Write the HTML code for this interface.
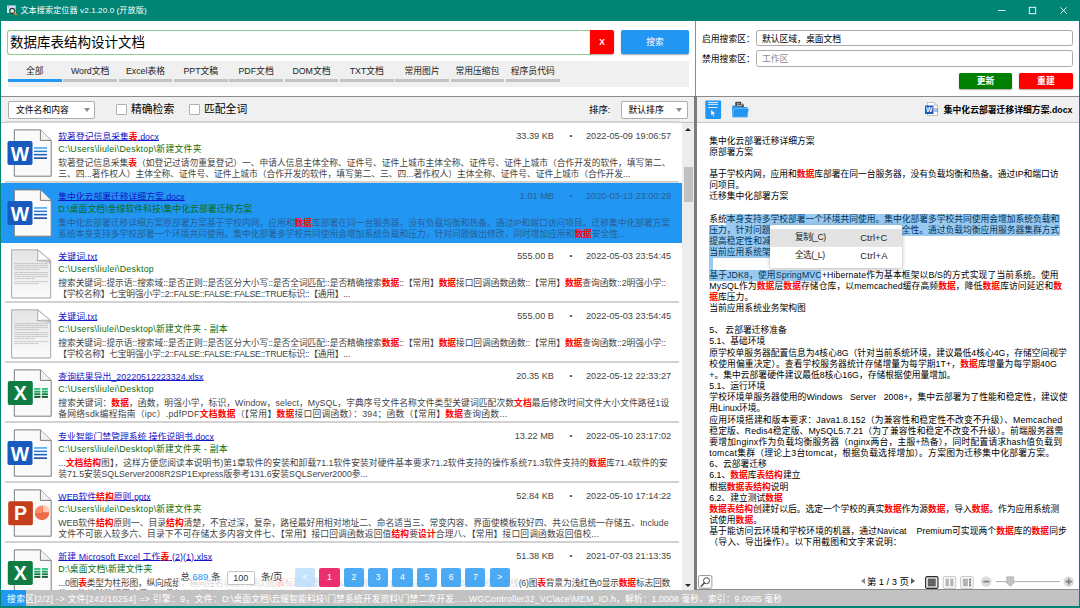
<!DOCTYPE html>
<html lang="zh-CN"><head><meta charset="utf-8"><title>文本搜索定位器</title>
<style>
*{box-sizing:border-box;margin:0;padding:0}
html,body{width:1080px;height:608px;overflow:hidden}
body{position:relative;background:#008575;font-family:"Liberation Sans","Noto Sans CJK SC",sans-serif;font-size:8.8px;color:#000}
b.r{color:#f00;font-weight:bold}
#titlebar{position:absolute;left:0;top:0;width:1080px;height:21px;background:#008575;color:#fff}
#titlebar::after{content:"";position:absolute;left:1px;top:20.65px;width:1078px;height:.5px;background:#fff}
.appicon{position:absolute;left:6px;top:4px;width:14px;height:14px}
.apptitle{position:absolute;left:20.4px;top:5.2px;font-size:8.1px;line-height:11px;white-space:nowrap}
.wc{position:absolute;right:0;top:0;width:140px;height:21px}
#left-top{position:absolute;left:1px;top:21px;width:696px;height:75px;background:#fff}
.searchbox{position:absolute;left:6px;top:9px;width:584px;height:25px;border:1px solid #8fce8f;border-right:none;border-radius:3px 0 0 3px;background:#fff}
.searchbox span{position:absolute;left:2px;top:2.5px;font-size:13.5px;line-height:18px;white-space:nowrap}
.xbtn{position:absolute;left:589px;top:9.2px;width:24px;height:23.8px;background:#f00;color:#fff;font-size:8.5px;font-weight:bold;text-align:center;line-height:24px;border-radius:0 2px 2px 0;box-shadow:0 1px 1.5px rgba(0,0,0,.35)}
.sbtn{position:absolute;left:620.2px;top:9.2px;width:67.6px;height:23.8px;background:#2196f3;color:#fff;font-size:8.8px;text-align:center;line-height:24px;border-radius:2px;box-shadow:0 1px 1.5px rgba(0,0,0,.35)}
.tabs{position:absolute;left:7px;top:40px;width:681px;height:26px;background:#f0f0f0}
.tab{position:absolute;top:0;width:53.6px;height:26px;text-align:center}
.tab span{display:block;font-size:8.8px;line-height:12px;margin-top:4px;white-space:nowrap;color:#222}
.tab i{position:absolute;left:0;right:0;top:18px;height:3px;background:#c3c3c3}
.tab.on i{background:#2196f3}
#right-top{position:absolute;left:697px;top:21px;width:382px;height:75px;background:#fff}
#right-top .lbl{position:absolute;left:5px;font-size:8.8px;line-height:12px;white-space:nowrap}
.inp{position:absolute;left:58.9px;width:317px;height:16.3px;border:1px solid #ababab;border-radius:2.5px;background:#fff}
.inp span{position:absolute;left:5px;top:1.5px;font-size:8.8px;line-height:12px;white-space:nowrap}
.inp span.ph{color:#8c8c8c}
.btn{position:absolute;top:51.8px;width:53.8px;height:16px;color:#fff;font-size:8.8px;font-weight:bold;text-align:center;line-height:16px;border-radius:1.5px;box-shadow:0 1px 1.5px rgba(0,0,0,.35)}
.btn.g{background:#008000}
.btn.rd{background:#f00}
#hline{position:absolute;left:1px;top:96px;width:1078px;height:1px;background:#8c8c8c}
#filter{position:absolute;left:1px;top:97px;width:694px;height:25.5px;background:#f0f0f0;border-bottom:1px solid #c6c6c6}
.combo{position:absolute;top:4.2px;height:17.6px;border:1px solid #adadad;border-radius:2px;background:#fff}
.combo span{position:absolute;left:7px;top:2px;font-size:8.8px;line-height:12px;white-space:nowrap}
.combo .arr{position:absolute;right:4.5px;top:5.5px;width:0;height:0;border-left:3.3px solid transparent;border-right:3.3px solid transparent;border-top:4.2px solid #8a8a8a}
.cb{position:absolute;top:6.6px;width:11px;height:11px;border:1px solid #b0b0b0;background:#fff;border-radius:1px}
.cbl{position:absolute;top:5px;font-size:10.8px;line-height:15px;white-space:nowrap}
.sortl{position:absolute;left:588px;top:6px;font-size:9.4px;line-height:13px;white-space:nowrap}
#rtool{position:absolute;left:697px;top:97px;width:382px;height:25.5px;background:#f0f0f0;border-bottom:1px solid #c6c6c6}
.ti1{position:absolute;left:8px;top:3px;width:18px;height:20px}
.ti2{position:absolute;left:34.9px;top:4.2px;width:22px;height:20px}
.dtitle{position:absolute;left:246.75px;top:5.5px;font-size:8.8px;font-weight:bold;line-height:14px;white-space:nowrap}
.dicon{position:absolute;left:227px;top:3.5px;width:18px;height:18px}
#list{position:absolute;left:1px;top:0;width:681px;height:590px;overflow:hidden}
#list::before{content:"";position:absolute;left:0;top:122.5px;width:681px;height:468px;background:#fff}
.item{position:absolute;left:0;width:681px;height:60px}
.item::after{content:"";position:absolute;left:3.5px;right:3px;top:-1.5px;height:1.4px;background:#d2d2d2}
.item.sel{background:#2196f3}
.item.sel+.item::after{display:none}
.ic{position:absolute;left:0;top:0;width:56px;height:60px}
.item .t{position:absolute;left:57.3px;top:8.2px;font-size:8.8px;line-height:12px;color:#1414c8;text-decoration:underline;text-underline-offset:0.2px;text-decoration-thickness:.8px;white-space:nowrap}
.item .p{position:absolute;left:57.3px;top:20.5px;font-size:8.8px;line-height:12px;color:#0c6b0c;white-space:nowrap}
.item .d{position:absolute;left:57.3px;font-size:8.75px;line-height:12px;color:#444;white-space:nowrap}
.item .d1{top:34.3px}
.item .d2{top:45.3px}
.item .sz{position:absolute;right:128px;top:7px;font-size:9.2px;line-height:12px;color:#444;white-space:nowrap}
.item .dot{position:absolute;left:566px;top:7px;width:8px;text-align:center;font-size:8px;line-height:12px;color:#444}
.item .dt{position:absolute;left:585px;top:7px;font-size:9.2px;line-height:12px;color:#444;white-space:nowrap}
.item.sel .d,.item.sel .sz,.item.sel .dt,.item.sel .dot{color:#2a5f93}
#vscroll{position:absolute;left:682px;top:122.5px;width:13px;height:467.5px;background:#ededed}
#vscroll .thumb{position:absolute;left:2px;top:44px;width:9px;height:35px;background:#c1c1c1}
#vscroll .up{position:absolute;left:2.9px;top:5.8px;border-left:3.1px solid transparent;border-right:3.1px solid transparent;border-bottom:3.3px solid #262626}
#vscroll .down{position:absolute;left:2.9px;top:461px;border-left:3.1px solid transparent;border-right:3.1px solid transparent;border-top:3.3px solid #262626}
#split{position:absolute;left:694.4px;top:96px;width:2.3px;height:494px;background:#7c7c7c}
#split2{position:absolute;left:694.9px;top:21px;width:1.1px;height:75px;background:#8c8c8c}
#pager{position:absolute;left:0;top:564px;width:560px;height:26px}
#pager::before{content:"";position:absolute;left:178px;top:0;width:341px;height:26px;background:rgba(255,255,255,.78)}
#pager .pt{position:absolute;top:5.5px;font-size:9.4px;line-height:13px;color:#333;white-space:nowrap}
#pager .pt.bl{color:#2196f3}
#pager .pin{position:absolute;left:227px;top:6.5px;width:27.5px;height:14px;border:1px solid #c4c4c4;border-radius:2px;background:rgba(255,255,255,.9);font-size:9px;line-height:12px;text-align:center;color:#333}
.pb{position:absolute;top:3.5px;width:20.3px;height:19px;background:rgba(33,150,243,.8);color:#fff;font-size:8.5px;line-height:19px;text-align:center;border-radius:2px}
.pb.cur{background:rgba(233,30,99,.92)}
.pb.dis{background:rgba(187,222,251,.85)}
#doc{position:absolute;left:697px;top:122.5px;width:382px;height:468px;background:#fff;overflow:hidden}
.ln{position:absolute;left:12.3px;font-size:8.78px;line-height:11.16px;height:11.16px;white-space:nowrap;color:#000}
.ln.j{text-align:justify;text-align-last:justify;white-space:normal;overflow:visible}
.selov{position:absolute;background:rgba(0,120,215,.4);z-index:3}
#ctx{position:absolute;left:769.8px;top:225.2px;width:132px;height:42.8px;background:#fff;border-radius:2px;box-shadow:0 1px 4px rgba(0,0,0,.3);z-index:5}
#ctx .mi{position:absolute;left:0;width:132px;height:17.5px;font-size:8.8px;line-height:17.5px;color:#222;white-space:nowrap}
#ctx .mi.on{top:3.9px;background:#e3e3e3}
#ctx .mi:not(.on){top:21.4px}
#ctx .a{position:absolute;left:25.2px;top:.3px;font-size:8.6px}
#ctx .k{position:absolute;left:90.4px;font-size:9.4px}
#vbar{position:absolute;left:697px;top:568.5px;width:382px;height:21.5px;background:#fff;border-bottom:1px solid #8c8c8c}
#vbar .find{position:absolute;left:1.2px;top:6.3px;width:15px;height:15px}
#vbar .pgnav{position:absolute;left:163.6px;top:6.1px;width:54.4px;height:14px;font-size:9.4px;line-height:14px;text-align:center;white-space:nowrap}
#vbar .pgnav span{position:absolute;left:6.4px;top:0}
#vbar .pgnav i{position:absolute;top:3.5px;width:0;height:0;border-top:3.5px solid transparent;border-bottom:3.5px solid transparent}
#vbar .pgnav .tl{left:0;border-right:4.2px solid #8a8a8a}
#vbar .pgnav .tr{left:50.7px;border-left:4.2px solid #5a5a5a}
#vbar .modes{position:absolute;left:228.4px;top:7px;width:52px;height:14px}
#vbar .zoom{position:absolute;left:283px;top:6.5px;width:96px;height:14px}
#status{position:absolute;left:1px;top:590px;width:1078px;height:16.2px;background:#c3c2c2;color:#fff;font-size:8.8px;line-height:15px;white-space:nowrap;overflow:hidden}
#status .prog{position:absolute;left:0;top:0;width:25px;height:16.2px;background:#2196f3}
#status span{position:absolute;top:2px}

</style></head><body>
<div id="titlebar">
<div class="appicon"><svg width="14" height="14" viewBox="0 0 14 14"><rect x="1" y="1.4" width="8.7" height="7.6" fill="#cfe4f7"/><rect x="1.6" y="2.4" width="1.6" height="0.8" fill="#e0524a"/><circle cx="6.2" cy="6.9" r="2.5" fill="#c9f0d4" stroke="#2f3440" stroke-width="1.1"/><path d="M8.4 9.1L10.2 10.5" stroke="#f5891c" stroke-width="1.6" stroke-linecap="round"/></svg></div>
<div class="apptitle" id="f16" style="letter-spacing:0.096px;">文本搜索定位器 v2.1.20.0 (开放版)</div>
<div class="wc"><svg width="140" height="21" viewBox="0 0 140 21"><path d="M58 10.5H65.5" stroke="#fff" stroke-width="0.9"/><rect x="89.3" y="7.3" width="6.4" height="6.4" fill="none" stroke="#fff" stroke-width="0.9"/><path d="M120.4 7.3L126.8 13.7M126.8 7.3L120.4 13.7" stroke="#fff" stroke-width="0.9"/></svg></div>
</div>
<div id="left-top">
<div class="searchbox"><span>数据库表结构设计文档</span></div>
<div class="xbtn">X</div>
<div class="sbtn">搜索</div>
<div class="tabs"><div class="tab on" style="left:0.00px"><span>全部</span><i></i></div><div class="tab" style="left:55.33px"><span>Word文档</span><i></i></div><div class="tab" style="left:110.66px"><span>Excel表格</span><i></i></div><div class="tab" style="left:165.99px"><span>PPT文稿</span><i></i></div><div class="tab" style="left:221.32px"><span>PDF文档</span><i></i></div><div class="tab" style="left:276.65px"><span>DOM文档</span><i></i></div><div class="tab" style="left:331.98px"><span>TXT文档</span><i></i></div><div class="tab" style="left:387.31px"><span>常用图片</span><i></i></div><div class="tab" style="left:442.64px"><span>常用压缩包</span><i></i></div><div class="tab" style="left:497.97px"><span>程序员代码</span><i></i></div></div>
</div>
<div id="right-top">
<div class="lbl" style="top:12px">启用搜索区：</div>
<div class="inp" style="top:9px"><span>默认区域，桌面文档</span></div>
<div class="lbl" style="top:32.2px">禁用搜索区：</div>
<div class="inp" style="top:29.4px"><span class="ph">工作区</span></div>
<div class="btn g" style="left:261.7px">更新</div>
<div class="btn rd" style="left:322px">重建</div>
</div>
<div id="hline"></div>
<div id="filter">
<div class="combo" style="left:7px;width:87px"><span>文件名和内容</span><i class="arr"></i></div>
<div class="cb" style="left:115px"></div><div class="cbl" style="left:130px">精确检索</div>
<div class="cb" style="left:188px"></div><div class="cbl" style="left:203px">匹配全词</div>
<div class="sortl">排序:</div>
<div class="combo" style="left:619.5px;width:67.3px"><span>默认排序</span><i class="arr"></i></div>
</div>
<div id="rtool">
<div class="ti1"><svg width="18" height="20" viewBox="0 0 18 20"><rect x="0.3" y="0.5" width="15.8" height="18.5" rx="1.2" fill="#2196f3"/><path d="M3 2.5H13M3 4.4H13M3 7.5H12.4" stroke="#fff" stroke-width="0.9" opacity=".9"/><path d="M5.9 9.6V15.6L7.4 14.4L8.5 16.8L9.6 16.3L8.5 14L10.6 13.8Z" fill="#fff" stroke="#1c6fbf" stroke-width="0.35"/></svg></div>
<div class="ti2"><svg width="22" height="20" viewBox="0 0 22 20"><path d="M3.6 1.2H9L11.4 3.6V8H3.6Z" fill="#3c3c3c" stroke="#333" stroke-width="0.6"/><path d="M4.8 2.9H7.6M4.8 4.8H10" stroke="#f4f4f4" stroke-width="0.9"/><path d="M9 1.2V3.6H11.4Z" fill="#eee"/><path d="M0.2 5.6Q0.2 4.6 1.2 4.6H4.2L5.4 6H14.8Q15.6 6 15.6 6.8V16.2H0.2Z" fill="#2196f3"/><path d="M2.2 7.4H16.9L15.3 16.2H0.4Z" fill="#2196f3" stroke="#f2f2f2" stroke-width="0.35"/></svg></div>
<div class="dicon"><svg width="16" height="16" viewBox="0 0 16 16" style="vertical-align:-4px;margin-right:4px"><path d="M3.5 1.5H10.5L13.5 4.5V14.5H3.5Z" fill="#fff" stroke="#aaa" stroke-width="0.7"/><path d="M10.5 1.5V4.5H13.5" fill="#eee" stroke="#aaa" stroke-width="0.7"/><path d="M10 8H14M10 10H14" stroke="#2b66c4" stroke-width="0.8"/><rect x="1" y="4.5" width="8.5" height="8.5" rx="0.6" fill="#185abd"/><text x="5.2" y="11.3" text-anchor="middle" font-family="Liberation Sans, sans-serif" font-weight="bold" font-size="6.8" fill="#fff">W</text></svg></div>
<div class="dtitle" id="f21" style="letter-spacing:0.012px;">集中化云部署迁移详细方案.docx</div>
</div>
<div id="list">
<div class="item" style="top:122.80px">
<div class="ic"><svg width="56" height="60" viewBox="0 0 56 60"><path d="M13.3 6.9H39.4L50.2 17.4V53.2H13.3Z" fill="#fafafa" stroke="#7d7d7d" stroke-width="1"/><path d="M39.4 6.9V17.4H50.2" fill="#f2f2f2" stroke="#7d7d7d" stroke-width="1" stroke-linejoin="round"/><rect x="33" y="24.2" width="13" height="1.5" fill="#41a5ee"/><rect x="33" y="27.6" width="13" height="1.5" fill="#2b7cd3"/><rect x="33" y="30.9" width="13" height="1.5" fill="#185abd"/><rect x="33" y="34.4" width="13" height="1.5" fill="#103f91"/><rect x="6.5" y="18.1" width="25" height="24" rx="1.8" fill="#185abd"/><text x="19" y="37.6" text-anchor="middle" font-family="Liberation Sans, sans-serif" font-weight="bold" font-size="19.5" fill="#fff">W</text></svg></div>
<a class="t" id="f27" style="letter-spacing:0.020px;">软著登记信息采集<b class="r">表</b>.docx</a>
<div class="p" id="f28" style="letter-spacing:0.277px;">C:\Users\liulei\Desktop\新建文件夹</div>
<div class="sz">33.39 KB</div><div class="dot">•</div><div class="dt" id="f31" style="letter-spacing:-0.006px;">2022-05-09 19:06:57</div>
<div class="d d1" id="f29" style="letter-spacing:-0.006px;">软著登记信息采集<b class="r">表</b>（如登记过请勿重复登记）一、申请人信息主体全称、证件号、证件上城市主体全称、证件号、证件上城市（合作开发的软件，填写第二、</div>
<div class="d d2" id="f30" style="letter-spacing:-0.016px;">三、四...著作权人）主体全称、证件号、证件上城市（合作开发的软件，填写第二、三、四...著作权人）主体全称、证件号、证件上城市（合作开发...</div>
</div><div class="item sel" style="top:182.80px">
<div class="ic"><svg width="56" height="60" viewBox="0 0 56 60"><path d="M13.3 6.9H39.4L50.2 17.4V53.2H13.3Z" fill="#fafafa" stroke="#7d7d7d" stroke-width="1"/><path d="M39.4 6.9V17.4H50.2" fill="#f2f2f2" stroke="#7d7d7d" stroke-width="1" stroke-linejoin="round"/><rect x="33" y="24.2" width="13" height="1.5" fill="#41a5ee"/><rect x="33" y="27.6" width="13" height="1.5" fill="#2b7cd3"/><rect x="33" y="30.9" width="13" height="1.5" fill="#185abd"/><rect x="33" y="34.4" width="13" height="1.5" fill="#103f91"/><rect x="6.5" y="18.1" width="25" height="24" rx="1.8" fill="#185abd"/><text x="19" y="37.6" text-anchor="middle" font-family="Liberation Sans, sans-serif" font-weight="bold" font-size="19.5" fill="#fff">W</text></svg></div>
<a class="t" id="f32" style="letter-spacing:-0.012px;">集中化云部署迁移详细方案.docx</a>
<div class="p" id="f33" style="letter-spacing:0.070px;">D:\桌面文档\金缐软件科技\集中化云部署迁移方案</div>
<div class="sz">1.01 MB</div><div class="dot">•</div><div class="dt" id="f36" style="letter-spacing:-0.006px;">2020-03-13 23:00:29</div>
<div class="d d1" id="f34" style="letter-spacing:-0.002px;">集中化云部署迁移详细方案原部署方案基于学校内网，应用和<b class="r">数据</b>库部署在同一台服务器，没有负载均衡和热备。通过IP和端口访问项目。迁移集中化部署方案</div>
<div class="d d2" id="f35" style="letter-spacing:-0.003px;">系统本身支持多学校部署一个环境共同使用。集中化部署多学校共同使用会增加系统负载和压力，针对问题做出修改，同时增加应用和<b class="r">数据</b>安全性...</div>
</div><div class="item" style="top:242.80px">
<div class="ic"><svg width="56" height="60" viewBox="0 0 56 60"><defs><linearGradient id="tg" x1="0" y1="0" x2="0" y2="1"><stop offset="0" stop-color="#e4e4e4"/><stop offset="1" stop-color="#fbfbfb"/></linearGradient></defs><path d="M10.6 6.8H36.6L49.6 17.6V54.9H10.6Z" fill="#bdbdbd" opacity=".55" transform="translate(0.5,0.6)"/><path d="M10.6 6.8H36.6L49.6 17.6V54.9H10.6Z" fill="url(#tg)" stroke="#a3a3a3" stroke-width="0.9"/><path d="M36.6 6.8C37 11 36.9 14.6 36.3 17.9C40 17 45 17 49.6 17.6Z" fill="#fdfdfd" stroke="#9a9a9a" stroke-width="0.8"/><path d="M36 18.6C40 17.4 45 17.4 49.4 18.2L49.4 21C45 19 40 18.4 36 18.6Z" fill="#b0b0b0" opacity=".6"/><path d="M13.6 20.6H47" stroke="#9c9c9c" stroke-width="0.55" stroke-dasharray="2.2 0.5 1.2 0.4"/><path d="M13.6 22.6H47" stroke="#9c9c9c" stroke-width="0.55" stroke-dasharray="3.1 0.5 2.4 0.4"/><path d="M13.6 24.6H47" stroke="#9c9c9c" stroke-width="0.55" stroke-dasharray="1.7 0.5 1.2 0.4"/><path d="M13.6 26.6H38" stroke="#9c9c9c" stroke-width="0.55" stroke-dasharray="2.2 0.5 2.4 0.4"/><path d="M13.6 29.6H47" stroke="#9c9c9c" stroke-width="0.55" stroke-dasharray="3.1 0.5 1.2 0.4"/><path d="M13.6 31.6H47" stroke="#9c9c9c" stroke-width="0.55" stroke-dasharray="2.2 0.5 2.4 0.4"/><path d="M13.6 33.6H47" stroke="#9c9c9c" stroke-width="0.55" stroke-dasharray="1.7 0.5 2.4 0.4"/><path d="M13.6 35.6H34" stroke="#9c9c9c" stroke-width="0.55" stroke-dasharray="1.7 0.5 1.2 0.4"/><path d="M13.6 38.6H47" stroke="#9c9c9c" stroke-width="0.55" stroke-dasharray="2.2 0.5 1.2 0.4"/><path d="M13.6 40.6H38" stroke="#9c9c9c" stroke-width="0.55" stroke-dasharray="3.1 0.5 1.2 0.4"/></svg></div>
<a class="t" id="f37" style="letter-spacing:0.119px;">关键词.txt</a>
<div class="p" id="f38" style="letter-spacing:0.294px;">C:\Users\liulei\Desktop</div>
<div class="sz">555.00 B</div><div class="dot">•</div><div class="dt" id="f41" style="letter-spacing:-0.006px;">2022-05-03 23:54:45</div>
<div class="d d1" id="f39" style="letter-spacing:-0.069px;">搜索关键词::提示语::搜索域::是否正则::是否区分大小写::是否全词匹配::是否精确搜索<b class="r">数据</b>::【常用】<b class="r">数据</b>接口回调函数函数::【常用】<b class="r">数据</b>查询函数::2明强小学::</div>
<div class="d d2" id="f40" style="letter-spacing:-0.241px;">【学校名称】七宝明强小学::2::FALSE::FALSE::FALSE::TRUE标识::【通用】...</div>
</div><div class="item" style="top:302.80px">
<div class="ic"><svg width="56" height="60" viewBox="0 0 56 60"><defs><linearGradient id="tg" x1="0" y1="0" x2="0" y2="1"><stop offset="0" stop-color="#e4e4e4"/><stop offset="1" stop-color="#fbfbfb"/></linearGradient></defs><path d="M10.6 6.8H36.6L49.6 17.6V54.9H10.6Z" fill="#bdbdbd" opacity=".55" transform="translate(0.5,0.6)"/><path d="M10.6 6.8H36.6L49.6 17.6V54.9H10.6Z" fill="url(#tg)" stroke="#a3a3a3" stroke-width="0.9"/><path d="M36.6 6.8C37 11 36.9 14.6 36.3 17.9C40 17 45 17 49.6 17.6Z" fill="#fdfdfd" stroke="#9a9a9a" stroke-width="0.8"/><path d="M36 18.6C40 17.4 45 17.4 49.4 18.2L49.4 21C45 19 40 18.4 36 18.6Z" fill="#b0b0b0" opacity=".6"/><path d="M13.6 20.6H47" stroke="#9c9c9c" stroke-width="0.55" stroke-dasharray="2.2 0.5 1.2 0.4"/><path d="M13.6 22.6H47" stroke="#9c9c9c" stroke-width="0.55" stroke-dasharray="3.1 0.5 2.4 0.4"/><path d="M13.6 24.6H47" stroke="#9c9c9c" stroke-width="0.55" stroke-dasharray="1.7 0.5 1.2 0.4"/><path d="M13.6 26.6H38" stroke="#9c9c9c" stroke-width="0.55" stroke-dasharray="2.2 0.5 2.4 0.4"/><path d="M13.6 29.6H47" stroke="#9c9c9c" stroke-width="0.55" stroke-dasharray="3.1 0.5 1.2 0.4"/><path d="M13.6 31.6H47" stroke="#9c9c9c" stroke-width="0.55" stroke-dasharray="2.2 0.5 2.4 0.4"/><path d="M13.6 33.6H47" stroke="#9c9c9c" stroke-width="0.55" stroke-dasharray="1.7 0.5 2.4 0.4"/><path d="M13.6 35.6H34" stroke="#9c9c9c" stroke-width="0.55" stroke-dasharray="1.7 0.5 1.2 0.4"/><path d="M13.6 38.6H47" stroke="#9c9c9c" stroke-width="0.55" stroke-dasharray="2.2 0.5 1.2 0.4"/><path d="M13.6 40.6H38" stroke="#9c9c9c" stroke-width="0.55" stroke-dasharray="3.1 0.5 1.2 0.4"/></svg></div>
<a class="t" id="f42" style="letter-spacing:0.119px;">关键词.txt</a>
<div class="p" id="f43" style="letter-spacing:0.259px;">C:\Users\liulei\Desktop\新建文件夹 - 副本</div>
<div class="sz">555.00 B</div><div class="dot">•</div><div class="dt" id="f46" style="letter-spacing:-0.006px;">2022-05-03 23:54:45</div>
<div class="d d1" id="f44" style="letter-spacing:-0.069px;">搜索关键词::提示语::搜索域::是否正则::是否区分大小写::是否全词匹配::是否精确搜索<b class="r">数据</b>::【常用】<b class="r">数据</b>接口回调函数函数::【常用】<b class="r">数据</b>查询函数::2明强小学::</div>
<div class="d d2" id="f45" style="letter-spacing:-0.241px;">【学校名称】七宝明强小学::2::FALSE::FALSE::FALSE::TRUE标识::【通用】...</div>
</div><div class="item" style="top:362.80px">
<div class="ic"><svg width="56" height="60" viewBox="0 0 56 60"><path d="M13.3 6.9H39.4L50.2 17.4V53.2H13.3Z" fill="#fafafa" stroke="#7d7d7d" stroke-width="1"/><path d="M39.4 6.9V17.4H50.2" fill="#f2f2f2" stroke="#7d7d7d" stroke-width="1" stroke-linejoin="round"/><g><rect x="33.2" y="25" width="6.2" height="1.9" fill="#33c481"/><rect x="40.9" y="25" width="6" height="1.9" fill="#33c481"/><rect x="33.2" y="27.7" width="6.2" height="1.9" fill="#21a366"/><rect x="40.9" y="27.7" width="6" height="1.9" fill="#21a366"/><rect x="33.2" y="30.3" width="6.2" height="1.9" fill="#107c41"/><rect x="40.9" y="30.3" width="6" height="1.9" fill="#107c41"/><rect x="33.2" y="33" width="6.2" height="1.9" fill="#185c37"/><rect x="40.9" y="33" width="6" height="1.9" fill="#185c37"/></g><rect x="6.8" y="18.1" width="25" height="24" rx="1.8" fill="#107c41"/><text x="19.3" y="37.3" text-anchor="middle" font-family="Liberation Sans, sans-serif" font-weight="bold" font-size="19.5" fill="#fff">X</text></svg></div>
<a class="t" id="f47" style="letter-spacing:0.056px;">查询结果导出_20220512223324.xlsx</a>
<div class="p" id="f48" style="letter-spacing:0.294px;">C:\Users\liulei\Desktop</div>
<div class="sz">20.35 KB</div><div class="dot">•</div><div class="dt" id="f51" style="letter-spacing:-0.006px;">2022-05-12 22:33:27</div>
<div class="d d1" id="f49" style="letter-spacing:0.087px;">搜索关键词：<b class="r">数据</b>，函数，明强小学，标识，Window，select，MySQL，字典序号文件名称文件类型关键词匹配次数<b class="r">文档</b>最后修改时间文件大小文件路径1设</div>
<div class="d d2" id="f50" style="letter-spacing:0.260px;">备网络sdk编程指南（ipc）.pdfPDF<b class="r">文档数据</b>（【常用】<b class="r">数据</b>接口回调函数）：394；函数（【常用】<b class="r">数据</b>查询函数...</div>
</div><div class="item" style="top:422.80px">
<div class="ic"><svg width="56" height="60" viewBox="0 0 56 60"><path d="M13.3 6.9H39.4L50.2 17.4V53.2H13.3Z" fill="#fafafa" stroke="#7d7d7d" stroke-width="1"/><path d="M39.4 6.9V17.4H50.2" fill="#f2f2f2" stroke="#7d7d7d" stroke-width="1" stroke-linejoin="round"/><rect x="33" y="24.2" width="13" height="1.5" fill="#41a5ee"/><rect x="33" y="27.6" width="13" height="1.5" fill="#2b7cd3"/><rect x="33" y="30.9" width="13" height="1.5" fill="#185abd"/><rect x="33" y="34.4" width="13" height="1.5" fill="#103f91"/><rect x="6.5" y="18.1" width="25" height="24" rx="1.8" fill="#185abd"/><text x="19" y="37.6" text-anchor="middle" font-family="Liberation Sans, sans-serif" font-weight="bold" font-size="19.5" fill="#fff">W</text></svg></div>
<a class="t" id="f52" style="letter-spacing:0.008px;">专业智能门禁管理系统 操作说明书.docx</a>
<div class="p" id="f53" style="letter-spacing:0.259px;">C:\Users\liulei\Desktop\新建文件夹 - 副本</div>
<div class="sz">13.22 MB</div><div class="dot">•</div><div class="dt" id="f56" style="letter-spacing:-0.006px;">2022-05-10 23:17:02</div>
<div class="d d1" id="f54" style="letter-spacing:0.068px;">...<b class="r">文档结构</b>图】，这样方便您阅读本说明书)第1章软件的安装和卸载71.1软件安装对硬件基本要求71.2软件支持的操作系统71.3软件支持的<b class="r">数据</b>库71.4软件的安</div>
<div class="d d2" id="f55" style="letter-spacing:-0.005px;">装71.5安装SQLServer2008R2SP1Express版参考131.6安装SQLServer2000参...</div>
</div><div class="item" style="top:482.80px">
<div class="ic"><svg width="56" height="60" viewBox="0 0 56 60"><path d="M13.3 6.9H39.4L50.2 17.4V53.2H13.3Z" fill="#fafafa" stroke="#7d7d7d" stroke-width="1"/><path d="M39.4 6.9V17.4H50.2" fill="#f2f2f2" stroke="#7d7d7d" stroke-width="1" stroke-linejoin="round"/><circle cx="41" cy="30" r="7.2" fill="#ed6c47"/><path d="M41 30H33.8A7.2 7.2 0 0 1 41 22.8Z" fill="#ff8f6b"/><path d="M41.8 29.2V22A7.2 7.2 0 0 1 49 29.2Z" fill="#ffc7b5"/><rect x="7.2" y="18.3" width="24.7" height="24" rx="1.8" fill="#c43e1c"/><text x="19.6" y="37.3" text-anchor="middle" font-family="Liberation Sans, sans-serif" font-weight="bold" font-size="19.5" fill="#fff">P</text></svg></div>
<a class="t" id="f57" style="letter-spacing:0.035px;">WEB软件<b class="r">结构</b>原则.pptx</a>
<div class="p" id="f58" style="letter-spacing:0.277px;">C:\Users\liulei\Desktop\新建文件夹</div>
<div class="sz">52.84 KB</div><div class="dot">•</div><div class="dt" id="f61" style="letter-spacing:-0.006px;">2022-05-10 17:14:22</div>
<div class="d d1" id="f59" style="letter-spacing:0.028px;">WEB软件<b class="r">结构</b>原则一、目录<b class="r">结构</b>清楚，不宜过深，复杂，路径最好用相对地址二、命名适当三、常变内容、界面使模板较好四、共公信息统一存储五、Include</div>
<div class="d d2" id="f60" style="letter-spacing:0.131px;">文件不可嵌入较多六、目录下不可存储太多内容文件七、【常用】接口回调函数返回值<b class="r">结构</b>要<b class="r">设计</b>合理八、【常用】接口回调函数返回值校...</div>
</div><div class="item" style="top:542.80px">
<div class="ic"><svg width="56" height="60" viewBox="0 0 56 60"><path d="M13.3 6.9H39.4L50.2 17.4V53.2H13.3Z" fill="#fafafa" stroke="#7d7d7d" stroke-width="1"/><path d="M39.4 6.9V17.4H50.2" fill="#f2f2f2" stroke="#7d7d7d" stroke-width="1" stroke-linejoin="round"/><g><rect x="33.2" y="25" width="6.2" height="1.9" fill="#33c481"/><rect x="40.9" y="25" width="6" height="1.9" fill="#33c481"/><rect x="33.2" y="27.7" width="6.2" height="1.9" fill="#21a366"/><rect x="40.9" y="27.7" width="6" height="1.9" fill="#21a366"/><rect x="33.2" y="30.3" width="6.2" height="1.9" fill="#107c41"/><rect x="40.9" y="30.3" width="6" height="1.9" fill="#107c41"/><rect x="33.2" y="33" width="6.2" height="1.9" fill="#185c37"/><rect x="40.9" y="33" width="6" height="1.9" fill="#185c37"/></g><rect x="6.8" y="18.1" width="25" height="24" rx="1.8" fill="#107c41"/><text x="19.3" y="37.3" text-anchor="middle" font-family="Liberation Sans, sans-serif" font-weight="bold" font-size="19.5" fill="#fff">X</text></svg></div>
<a class="t" id="f62" style="letter-spacing:0.114px;">新建 Microsoft Excel 工作<b class="r">表</b> (2)(1).xlsx</a>
<div class="p" id="f63" style="letter-spacing:0.091px;">D:\桌面文档\新建文件夹</div>
<div class="sz">51.38 KB</div><div class="dot">•</div><div class="dt" id="f65" style="letter-spacing:-0.006px;">2021-07-03 21:13:35</div>
<div class="d d1" id="f64" style="letter-spacing:-0.207px;">...0图<b class="r">表</b>类型为柱形图，纵向成绩，横向姓名以及科目(2)图<b class="r">表</b>标题成绩<b class="r">表</b>(3)X轴名称:人员;(4)Y轴名称：成绩(5)网格线为虚线(6)图<b class="r">表</b>背景为浅红色0显示<b class="r">数据</b>标志回数</div>
<div class="d d2"  style="">值(1)能体验数据图表展示，具体操作可参考帮助文档，功能十分强大...</div>
</div>
</div>
<div id="vscroll"><div class="up"></div><div class="thumb"></div><div class="down"></div></div>
<div id="pager"><span class="pt" style="left:180.5px">总</span><span class="pt bl" style="left:192.5px">689</span><span class="pt" style="left:211px">条</span><div class="pin">100</div><span class="pt" style="left:261px">条/页</span><div class="pb dis" style="left:295px">&lt;</div><div class="pb cur" style="left:319.3px">1</div><div class="pb" style="left:343.6px">2</div><div class="pb" style="left:368px">3</div><div class="pb" style="left:392.3px">4</div><div class="pb" style="left:416.6px">5</div><div class="pb" style="left:440.9px">6</div><div class="pb" style="left:465.2px">7</div><div class="pb" style="left:489.5px">&gt;</div></div>
<div id="split"></div><div id="split2"></div>
<div id="doc">
<div class="ln"  style="top:13.10px;">集中化云部署迁移详细方案</div>
<div class="ln"  style="top:24.26px;">原部署方案</div>
<div class="ln" id="f0" style="top:46.58px;letter-spacing:-0.022px;">基于学校内网，应用和<b class="r">数据</b>库部署在同一台服务器，没有负载均衡和热备。通过IP和端口访</div>
<div class="ln"  style="top:57.74px;">问项目。</div>
<div class="ln"  style="top:68.90px;">迁移集中化部署方案</div>
<div class="ln" id="f1" style="top:91.22px;letter-spacing:-0.014px;">系统本身支持多学校部署一个环境共同使用。集中化部署多学校共同使用会增加系统负载和</div>
<div class="ln" id="f2" style="top:102.38px;letter-spacing:-0.014px;">压力，针对问题做出修改，同时增加应用和数据安全性。通过负载均衡应用服务器集群方式</div>
<div class="ln"  style="top:113.54px;">提高稳定性和减少单点故障。</div>
<div class="ln"  style="top:124.70px;">当前应用系统架构</div>
<div class="ln" id="f3" style="top:147.02px;letter-spacing:0.132px;">基于JDK8，使用SpringMVC+Hibernate作为基本框架以B/S的方式实现了当前系统。使用</div>
<div class="ln" id="f4" style="top:158.18px;letter-spacing:0.091px;">MySQL作为<b class="r">数据</b>层<b class="r">数据</b>存储仓库，以memcached缓存高频<b class="r">数据</b>，降低<b class="r">数据</b>库访问延迟和<b class="r">数</b></div>
<div class="ln"  style="top:169.34px;"><b class="r">据</b>库压力。</div>
<div class="ln"  style="top:180.50px;">当前应用系统业务架构图</div>
<div class="ln"  style="top:202.82px;">5、 云部署迁移准备</div>
<div class="ln"  style="top:213.98px;">5.1、基础环境</div>
<div class="ln" id="f5" style="top:225.14px;letter-spacing:0.001px;">原学校单服务器配置信息为4核心8G（针对当前系统环境，建议最低4核心4G，存储空间视学</div>
<div class="ln" id="f6" style="top:236.30px;letter-spacing:0.108px;">校使用偏重决定）。查看学校服务器统计存储增量为每学期1T+，<b class="r">数据</b>库增量为每学期40G</div>
<div class="ln" id="f7" style="top:247.46px;letter-spacing:0.020px;">+。集中云部署硬件建议最低8核心16G，存储根据使用量增加。</div>
<div class="ln"  style="top:258.62px;">5.1、运行环境</div>
<div class="ln" id="f8" style="top:269.78px;letter-spacing:0.064px;">学校环境单服务器使用的Windows   Server   2008+，集中云部署为了性能和稳定性，建议使</div>
<div class="ln"  style="top:280.94px;">用Linux环境。</div>
<div class="ln" id="f9" style="top:292.10px;letter-spacing:0.156px;">应用环境搭建和版本要求：Java1.8.152（为兼容性和稳定性不改变不升级）、Memcached</div>
<div class="ln" id="f10" style="top:303.26px;letter-spacing:0.121px;">稳定版、Redis4稳定版、MySQL5.7.21（为了兼容性和稳定不改变不升级）。前端服务器需</div>
<div class="ln" id="f11" style="top:314.42px;letter-spacing:0.231px;">要增加nginx作为负载均衡服务器（nginx两台，主服+热备），同时配置请求hash值负载到</div>
<div class="ln" id="f12" style="top:325.58px;letter-spacing:0.256px;">tomcat集群（理论上3台tomcat，根据负载选择增加）。方案图为迁移集中化部署方案。</div>
<div class="ln"  style="top:336.74px;">6、云部署迁移</div>
<div class="ln"  style="top:347.90px;">6.1、<b class="r">数据</b>库<b class="r">表结构</b>建立</div>
<div class="ln"  style="top:359.06px;">根据<b class="r">数据表结构</b>说明</div>
<div class="ln"  style="top:370.22px;">6.2、建立测试<b class="r">数据</b></div>
<div class="ln" id="f13" style="top:381.38px;letter-spacing:-0.016px;"><b class="r">数据表结构</b>创建好以后。选定一个学校的真实<b class="r">数据</b>作为源<b class="r">数据</b>，导入<b class="r">数据</b>。作为应用系统测</div>
<div class="ln"  style="top:392.54px;">试使用<b class="r">数据</b>。</div>
<div class="ln" id="f14" style="top:403.70px;letter-spacing:0.058px;">基于能访问云环境和学校环境的机器，通过Navicat    Premium可实现两个<b class="r">数据</b>库的<b class="r">数据</b>同步</div>
<div class="ln" id="f15" style="top:414.86px;letter-spacing:0.183px;">（导入、导出操作）。以下用截图和文字来说明：</div>

<div class="selov" style="left:29.1px;top:91.22px;width:333.5px;height:11.26px"></div><div class="selov" style="left:11.8px;top:102.38px;width:350.8px;height:11.26px"></div><div class="selov" style="left:11.8px;top:113.54px;width:121.2px;height:11.26px"></div><div class="selov" style="left:11.8px;top:124.70px;width:91.2px;height:11.26px"></div><div class="selov" style="left:11.8px;top:135.86px;width:4.1px;height:11.26px"></div><div class="selov" style="left:11.8px;top:147.02px;width:112.1px;height:11.26px"></div>
</div>
<div id="ctx"><div class="mi on"><span class="a" id="f23" style="letter-spacing:-0.565px;">复制(_C)</span><span class="k" id="f24" style="letter-spacing:0.068px;">Ctrl+C</span></div><div class="mi"><span class="a" id="f25" style="letter-spacing:-0.488px;">全选(_L)</span><span class="k" id="f26" style="letter-spacing:0.198px;">Ctrl+A</span></div></div>
<div id="vbar">
<div class="find"><svg width="15" height="15" viewBox="0 0 15 15"><rect x="0.5" y="0.5" width="13.4" height="12.8" rx="1.6" fill="#fdfdfd" stroke="#8f8f8f" stroke-width="0.9"/><circle cx="8.5" cy="5.7" r="3" fill="#fff" stroke="#4a4a4a" stroke-width="1"/><path d="M6.3 8L3.2 11.2" stroke="#4a4a4a" stroke-width="1.5" stroke-linecap="round"/></svg></div>
<div class="pgnav"><i class="tl"></i><span id="f22" style="letter-spacing:-0.047px;">第 1 / 3 页</span><i class="tr"></i></div>
<div class="modes"><svg width="52" height="14" viewBox="0 0 52 14"><rect x="0.6" y="0.6" width="12.4" height="11.8" rx="1.5" fill="#e4e4e4" stroke="#2a2a2a" stroke-width="1.1"/><rect x="2.9" y="2.7" width="7.8" height="7.6" fill="#5a5a5a"/><path d="M2.9 5.2H10.7M2.9 7.8H10.7" stroke="#8a8a8a" stroke-width="0.5"/><rect x="18.2" y="0.5" width="12.6" height="12" rx="1.5" fill="#f7f7f7" stroke="#c4c4c4" stroke-width="0.9"/><rect x="20.6" y="2.7" width="3.2" height="7.6" fill="#b4b4b4"/><rect x="25.2" y="2.7" width="3.2" height="7.6" fill="#b4b4b4"/><rect x="35.6" y="0.5" width="12.6" height="12" rx="1.5" fill="#f7f7f7" stroke="#c4c4c4" stroke-width="0.9"/><rect x="37.9" y="2.7" width="5" height="7.6" fill="#b4b4b4"/><rect x="44.2" y="2.7" width="1.8" height="2" fill="#6e6e6e"/><rect x="44.2" y="5.5" width="1.8" height="2" fill="#6e6e6e"/><rect x="44.2" y="8.3" width="1.8" height="2" fill="#6e6e6e"/></svg></div>
<div class="zoom"><svg width="96" height="14" viewBox="0 0 96 14"><circle cx="6.3" cy="6.6" r="5.3" fill="#dcdcdc"/><path d="M3.3 6.6H9.3" stroke="#7c7c7c" stroke-width="1.7"/><path d="M15.9 6.6H79.8" stroke="#a2a2a2" stroke-width="0.9"/><path d="M26.7 1.8H33.8V8.2L30.25 11.3L26.7 8.2Z" fill="#c2c2c2" stroke="#a8a8a8" stroke-width="0.6"/><circle cx="88.7" cy="6.6" r="5.3" fill="#dcdcdc"/><path d="M85.6 6.6H91.8M88.7 3.5V9.7" stroke="#7c7c7c" stroke-width="1.7"/></svg></div>
</div>
<div id="status"><div class="prog"></div><span id="f17" style="left:6px;letter-spacing:0.351px;">搜索区[2/2] -&gt; 文件[242/10254] =&gt; 引擎：9，文件：</span><span id="f18" style="left:221px;letter-spacing:0.074px;">D:\桌面文档\云耀智能科技\门禁系统开发资料\门禁二次开发......</span><span id="f19" style="left:468px;letter-spacing:0.194px;">WGController32_VC\ace\MEM_IO.h，</span><span id="f20" style="left:624px;letter-spacing:0.062px;">解析：1.0008 毫秒，索引：9.0085 毫秒</span></div>
</body></html>
